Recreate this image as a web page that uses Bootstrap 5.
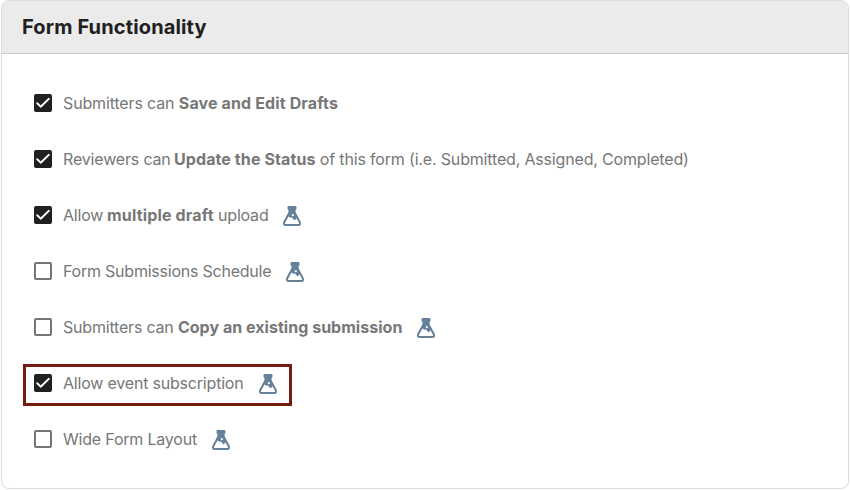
<!DOCTYPE html>
<html lang="en">
<head>
<meta charset="utf-8">
<meta name="viewport" content="width=device-width, initial-scale=1">
<title>Form Functionality</title>
<link href="https://cdn.jsdelivr.net/npm/bootstrap@5.3.0/dist/css/bootstrap.min.css" rel="stylesheet">
<style>
body { font-family: Inter, "Liberation Sans", sans-serif; background: #fff; }
.settings { margin: 0 1px 0 1px; height: 489px; border: 1px solid #dcdcdc; border-radius: 8px; }
.settings .card-header { height: 53px; padding: 0 20px; background: #ebebeb; border-bottom: 1px solid #c9c9c9; border-radius: 7px 7px 0 0; }
.settings h1 { font-size: 20px; font-weight: 700; color: #202020; letter-spacing: .14px; line-height: 24px; }
.settings .card-body { padding: 21px 32px; }
.option { height: 56px; font-size: 16px; color: #777; padding: 0; margin: 0; }
.option .form-check-input { width: 18px; height: 18px; margin: 0; float: none; border: 2px solid #767676; border-radius: 2px; flex: none; }
.option .form-check-input:checked { background-color: #202020; border-color: #202020; background-size: 18px; background-position: center;
  background-image: url("data:image/svg+xml,%3Csvg xmlns='http://www.w3.org/2000/svg' viewBox='0 0 18 18'%3E%3Cpath d='M3.2 9.3 6.8 12.700 14.800 4.900' fill='none' stroke='white' stroke-width='2' stroke-linecap='round'/%3E%3C/svg%3E"); }
.option label { margin-left: 11px; line-height: 24px; white-space: nowrap; letter-spacing: -.2px; }
.option strong { font-weight: 700; letter-spacing: .03px; }
#o1 + label { letter-spacing: -.14px; }
#o1 + label strong { letter-spacing: .13px; }
#o2 + label { letter-spacing: -.17px; }
#o2 + label strong { letter-spacing: .1px; margin-left: -1px; }
#o3 + label strong { letter-spacing: .17px; margin-left: -.5px; }
#o4 + label { letter-spacing: -.23px; }
.flask { width: 20px; height: 22px; margin-left: 14px; margin-top: 2px; flex: none; }
.marked::before { content: ""; position: absolute; left: -11px; top: 9px; width: 269px; height: 42px; border: 3px solid #761a12; }
</style>
<script src="https://cdn.jsdelivr.net/npm/bootstrap@5.3.0/dist/js/bootstrap.bundle.min.js"></script>
</head>
<body>
<svg class="d-none">
  <symbol id="flask" viewBox="0 0 20 22">
    <path d="M5.500 2.200Q5.500 1 6.700 1H13.300Q14.500 1 14.500 2.200V3.600Q14.500 4.800 13.600 4.800V8L15.800 12.200 14.300 13.400 12.600 15.400 9.600 12.300 8.200 13 7 11.400 5 12 6.400 8V4.800Q5.500 4.800 5.500 3.600Z" fill="#65809b"/>
    <path d="M7.200 8 2.200 17.300Q1.100 20 3.800 20H16.200Q18.900 20 17.800 17.300L12.800 8" fill="none" stroke="#65809b" stroke-width="2"/>
    <circle cx="10.800" cy="10.200" r="1.100" fill="#fff"/>
  </symbol>
</svg>
<main class="card settings">
  <div class="card-header d-flex align-items-center"><h1 class="m-0">Form Functionality</h1></div>
  <div class="card-body d-flex flex-column">
    <div class="form-check option d-flex align-items-center">
      <input class="form-check-input" type="checkbox" id="o1" checked>
      <label for="o1">Submitters can <strong>Save and Edit Drafts</strong></label>
    </div>
    <div class="form-check option d-flex align-items-center">
      <input class="form-check-input" type="checkbox" id="o2" checked>
      <label for="o2">Reviewers can <strong>Update the Status</strong> of this form (i.e. Submitted, Assigned, Completed)</label>
    </div>
    <div class="form-check option d-flex align-items-center">
      <input class="form-check-input" type="checkbox" id="o3" checked>
      <label for="o3">Allow <strong>multiple draft</strong> upload</label>
      <svg class="flask"><use href="#flask"/></svg>
    </div>
    <div class="form-check option d-flex align-items-center">
      <input class="form-check-input" type="checkbox" id="o4">
      <label for="o4">Form Submissions Schedule</label>
      <svg class="flask"><use href="#flask"/></svg>
    </div>
    <div class="form-check option d-flex align-items-center">
      <input class="form-check-input" type="checkbox" id="o5">
      <label for="o5">Submitters can <strong>Copy an existing submission</strong></label>
      <svg class="flask"><use href="#flask"/></svg>
    </div>
    <div class="form-check option marked position-relative d-flex align-items-center">
      <input class="form-check-input" type="checkbox" id="o6" checked>
      <label for="o6">Allow event subscription</label>
      <svg class="flask"><use href="#flask"/></svg>
    </div>
    <div class="form-check option d-flex align-items-center">
      <input class="form-check-input" type="checkbox" id="o7">
      <label for="o7">Wide Form Layout</label>
      <svg class="flask"><use href="#flask"/></svg>
    </div>
  </div>
</main>
</body>
</html>
